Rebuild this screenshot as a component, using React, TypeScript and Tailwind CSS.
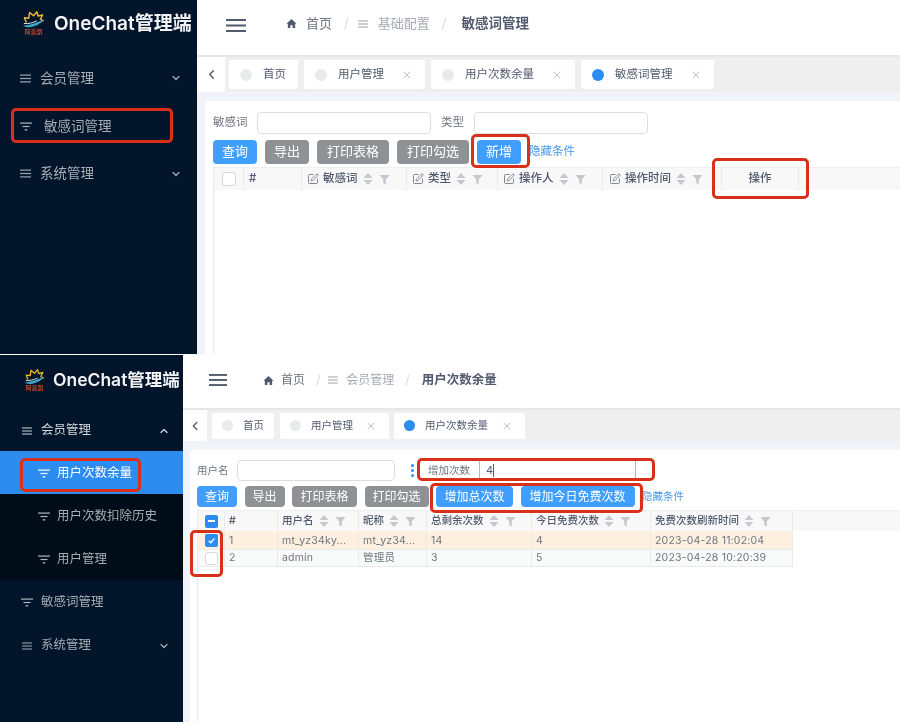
import React from "react";
import { ChevronDown, ChevronUp, ChevronLeft, X, SquarePen } from "lucide-react";

const Lines = ({ c = "w-[11px] h-[9px] text-[#9aa5b1]" }: { c?: string }) => (
  <svg viewBox="0 0 11 9" className={c + " shrink-0"} fill="currentColor">
    <rect x="0" y="0.5" width="11" height="1.2" />
    <rect x="0" y="3.9" width="11" height="1.2" />
    <rect x="0" y="7.3" width="11" height="1.2" />
  </svg>
);
const Funnel = ({ c = "text-[#aeb6bf]" }: { c?: string }) => (
  <svg viewBox="0 0 12 9" className={"w-[12px] h-[9px] shrink-0 " + c} fill="currentColor">
    <rect x="0" y="0.5" width="12" height="1.2" />
    <rect x="2.5" y="3.9" width="7" height="1.2" />
    <rect x="4.7" y="7.2" width="2.6" height="1.3" />
  </svg>
);
const Home = () => (
  <svg viewBox="0 0 12 12" className="w-[11px] h-[11px] shrink-0 text-[#515a6e]" fill="currentColor">
    <path d="M6 1 L11.5 6.2 H10 V11 H7.2 V7.8 H4.8 V11 H2 V6.2 H0.5 Z" />
  </svg>
);
const Logo = ({ c }: { c: string }) => (
  <div className={"flex flex-col items-center shrink-0 " + c}>
    <svg viewBox="0 0 24 18" className="w-full" fill="none">
      <path d="M4.5 12 L2.5 7 L7 7.5 L8 1.5 L12 5 L15.5 0.8 L16.8 5.2 L21.5 4 L19.2 8.5 L22.5 10.5" stroke="#f0b92e" strokeWidth="1.5" strokeLinejoin="round" />
      <path d="M1 15.5 C8 14.5 15 12.5 23.5 8.5 C19.5 13.5 13 16.5 7 17 C4.5 17.2 2.5 16.5 1 15.5 Z" fill="#3fa7c9" />
      <path d="M2 13 C7 13.5 11 12.5 15.5 10.3" stroke="#e9edf0" strokeWidth="1" />
    </svg>
    <span className="text-[6px] leading-[7px] text-[#c8472f] font-bold whitespace-nowrap">阿音凯</span>
  </div>
);
const Sort = () => (
  <svg viewBox="0 0 10 14" className="w-[10px] h-[14px] shrink-0" fill="#c5c8ce">
    <path d="M5 1 L9.5 6 H0.5 Z" />
    <path d="M5 13 L9.5 8 H0.5 Z" />
  </svg>
);
const Filter = () => (
  <svg viewBox="0 0 12 12" className="w-[11px] h-[11px] shrink-0" fill="#c5c8ce">
    <path d="M0.5 1 H11.5 L7.4 6 V11.5 L4.6 9.8 V6 Z" />
  </svg>
);
const Dot = ({ on, c }: { on?: boolean; c: string }) => (
  <span className={"rounded-full shrink-0 " + c + (on ? " bg-[#2d8cf0]" : " bg-[#e8eaec]")} />
);
const Tab = ({ label, w, on, close, dot, ml, pl, gap, text }: { label: string; w: string; on?: boolean; close?: boolean; dot: string; ml: string; pl: string; gap: string; text: string }) => (
  <div className={"h-full bg-white rounded-[2px] flex items-center shrink-0 text-[#515a6e] " + w + " " + ml + " " + pl + " " + gap + " " + text}>
    <Dot on={on} c={dot} />
    <span className="whitespace-nowrap mt-[1px]">{label}</span>
    {close && <X className="w-[12px] h-[12px] text-[#a9adb3] ml-auto mr-[12px]" strokeWidth={1.5} />}
  </div>
);
const Btn = ({ label, w, gray, c }: { label: string; w: string; gray?: boolean; c: string }) => (
  <div className={"rounded-[4px] text-white flex items-center justify-center shrink-0 whitespace-nowrap h-full " + w + " " + c + (gray ? " bg-[#8f9194]" : " bg-[#409eff]")}>{label}</div>
);
const TH = ({ label, w, edit, pl, gap, last }: { label: string; w: string; edit?: boolean; pl: string; gap: string; last?: boolean }) => (
  <div className={"h-full flex items-center border-r border-[#e8eaec] shrink-0 " + w + " " + pl}>
    {edit && <SquarePen className="w-[12px] h-[12px] text-[#6e7580] mr-[4px] shrink-0" strokeWidth={1.7} />}
    <span className="whitespace-nowrap">{label}</span>
    {!last && label !== "#" && (
      <span className={"flex items-center ml-[5px] " + gap}>
        <Sort />
        <Filter />
      </span>
    )}
  </div>
);
const Box = ({ c }: { c: string }) => <span className={"rounded-[3px] shrink-0 flex items-center justify-center " + c} />;
const Red = ({ c }: { c: string }) => <div className={"absolute border-[3px] border-[#d9301c] rounded-[5px] pointer-events-none " + c} />;
const TD = ({ w, t, pl = "pl-[5px]" }: { w: string; t: string; pl?: string }) => (
  <div className={"h-full flex items-center border-r border-[#e8eaec] shrink-0 whitespace-nowrap " + w + " " + pl}>{t}</div>
);

const Top = () => (
  <div className="relative flex h-[354px] overflow-hidden">
    <aside className="w-[197px] shrink-0 bg-[#03152b] flex flex-col text-[#a6adb4] text-[13.5px]">
      <div className="h-[54px] flex items-center pl-[22px] gap-[9px] shrink-0">
        <Logo c="w-[23px] -mt-[8px]" />
        <span className="text-[19px] font-semibold text-[#f1f3f5] whitespace-nowrap -mt-[6px]">OneChat管理端</span>
      </div>
      <div className="h-[48px] flex items-center pl-[20px] pr-[15px] gap-[9px]"><Lines /><span>会员管理</span><ChevronDown className="w-[12px] h-[12px] ml-auto" strokeWidth={2.4} /></div>
      <div className="h-[48px] flex items-center pl-[20px] gap-[12px]"><Funnel c="text-[#aeb6bf]" /><span>敏感词管理</span></div>
      <div className="h-[48px] flex items-center pl-[20px] pr-[15px] gap-[9px] pb-[1px]"><Lines /><span>系统管理</span><ChevronDown className="w-[12px] h-[12px] ml-auto" strokeWidth={2.4} /></div>
    </aside>
    <main className="flex-1 min-w-0 flex flex-col bg-[#f0f4f8]">
      <header className="h-[55px] bg-white flex items-center shrink-0 text-[13px] text-[#8d939d]">
        <svg viewBox="0 0 20 13" className="w-[20px] h-[13px] ml-[29px] text-[#515a6e] -mt-[4px]" fill="currentColor">
          <rect y="0" width="20" height="2" /><rect y="5.5" width="20" height="2" /><rect y="11" width="20" height="2" />
        </svg>
        <div className="flex items-center ml-[40px] -mt-[8px]">
          <Home />
          <span className="ml-[9px] text-[#6e7580]">首页</span>
          <span className="ml-[12px] text-[#d6d9de]">/</span>
          <span className="ml-[9px]"><Lines c="w-[10px] h-[8px] text-[#a3a8b0]" /></span>
          <span className="ml-[10px] text-[#a6abb3]">基础配置</span>
          <span className="ml-[12px] text-[#d6d9de]">/</span>
          <span className="ml-[15px] font-semibold text-[13.5px] text-[#515a6e]">敏感词管理</span>
        </div>
      </header>
      <div className="h-[37px] bg-[#efefef] border-t-2 border-[#e6e6e6] flex items-center shrink-0">
        <div className="w-[28px] h-full bg-white flex items-center justify-center shrink-0"><ChevronLeft className="w-[15px] h-[15px] text-[#515a6e]" strokeWidth={2.2} /></div>
        <div className="h-[29px] flex">
          <Tab label="首页" w="w-[69px]" ml="ml-[4px]" pl="pl-[11px]" gap="gap-[11px]" text="text-[11.5px]" dot="w-[12px] h-[12px]" />
          <Tab label="用户管理" w="w-[121px]" ml="ml-[6px]" pl="pl-[11px]" gap="gap-[11px]" text="text-[11.5px]" dot="w-[12px] h-[12px]" close />
          <Tab label="用户次数余量" w="w-[144px]" ml="ml-[6px]" pl="pl-[11px]" gap="gap-[11px]" text="text-[11.5px]" dot="w-[12px] h-[12px]" close />
          <Tab label="敏感词管理" w="w-[133px]" ml="ml-[6px]" pl="pl-[11px]" gap="gap-[11px]" text="text-[11.5px]" dot="w-[12px] h-[12px]" close on />
        </div>
      </div>
      <div className="flex-1 mt-[9px] ml-[8px] bg-white rounded-tl-[3px] pl-[8px] flex flex-col text-[11.5px] text-[#6e7580] min-h-0">
        <div className="flex items-center h-[22px] mt-[11px] shrink-0">
          <span className="w-[44px] whitespace-nowrap">敏感词</span>
          <span className="w-[174px] h-full rounded-[4px] border border-[#dcdee2] bg-white" />
          <span className="ml-[10px] w-[33px] whitespace-nowrap">类型</span>
          <span className="w-[174px] h-full rounded-[4px] border border-[#dcdee2] bg-white" />
        </div>
        <div className="flex items-center h-[24px] mt-[6px] gap-[8px] shrink-0">
          <Btn label="查询" w="w-[44px]" c="text-[13px]" />
          <Btn label="导出" w="w-[44px]" c="text-[13px]" gray />
          <Btn label="打印表格" w="w-[72px]" c="text-[13px]" gray />
          <Btn label="打印勾选" w="w-[72px]" c="text-[13px]" gray />
          <Btn label="新增" w="w-[44px]" c="text-[13px]" />
          <span className="text-[#4a98e8] whitespace-nowrap">隐藏条件</span>
        </div>
        <div className="flex-1 mt-[3px] border-l border-[#e8eaec] flex flex-col min-h-0">
          <div className="h-[23px] bg-[#f8f8f9] flex items-center border-t border-[#eceef0] text-[#515a6e] font-medium shrink-0">
            <div className="w-[30px] h-full flex items-center justify-center border-r border-[#e8eaec] shrink-0"><Box c="w-[14px] h-[14px] border border-[#d5d8dc] bg-white" /></div>
            <TH label="#" w="w-[58px]" pl="pl-[5px]" gap="gap-[5px]" />
            <TH label="敏感词" w="w-[105px]" pl="pl-[5px]" gap="gap-[6px]" edit />
            <TH label="类型" w="w-[91px]" pl="pl-[5px]" gap="gap-[6px]" edit />
            <TH label="操作人" w="w-[105px]" pl="pl-[5px]" gap="gap-[6px]" edit />
            <TH label="操作时间" w="w-[119px]" pl="pl-[6px]" gap="gap-[6px]" edit />
            <div className="w-[78px] h-full flex items-center justify-center border-x border-[#e8eaec] shrink-0 -ml-px">操作</div>
          </div>
        </div>
      </div>
    </main>
    <Red c="left-[11px] top-[108px] w-[162px] h-[35px]" />
    <Red c="left-[471px] top-[134px] w-[59px] h-[34px]" />
    <Red c="left-[712px] top-[158px] w-[97px] h-[41px]" />
  </div>
);

const Bottom = () => (
  <div className="relative flex h-[367px] mt-[1px] overflow-hidden">
    <aside className="w-[183px] shrink-0 bg-[#03152b] flex flex-col text-[#a6adb4] text-[12.5px]">
      <div className="h-[53px] flex items-center pl-[24px] gap-[8px] shrink-0">
        <Logo c="w-[21px] -mt-[3px]" />
        <span className="text-[17.5px] font-semibold text-[#f1f3f5] whitespace-nowrap -mt-[3px]">OneChat管理端</span>
      </div>
      <div className="h-[43px] flex items-center pl-[22px] pr-[13px] pt-[2px] gap-[9px] text-[#d5d9dd]"><Lines c="w-[10px] h-[8px] text-[#c6ccd2]" /><span>会员管理</span><ChevronUp className="w-[12px] h-[12px] ml-auto" strokeWidth={2.4} /></div>
      <div className="h-[43px] flex items-center pl-[38px] pt-[2px] gap-[7px] bg-[#2d8cf0] text-white"><Funnel c="w-[12px] text-white" /><span>用户次数余量</span></div>
      <div className="h-[43px] flex items-center pl-[38px] pt-[2px] gap-[7px] bg-[#000c17]"><Funnel /><span>用户次数扣除历史</span></div>
      <div className="h-[43px] flex items-center pl-[38px] pt-[2px] gap-[7px] bg-[#000c17]"><Funnel /><span>用户管理</span></div>
      <div className="h-[43px] flex items-center pl-[21px] pt-[2px] gap-[8px]"><Funnel /><span>敏感词管理</span></div>
      <div className="h-[43px] flex items-center pl-[22px] pr-[13px] pt-[2px] gap-[9px]"><Lines c="w-[10px] h-[8px] text-[#9aa5b1]" /><span>系统管理</span><ChevronDown className="w-[12px] h-[12px] ml-auto" strokeWidth={2.4} /></div>
    </aside>
    <main className="flex-1 min-w-0 flex flex-col bg-[#f0f4f8]">
      <header className="h-[53px] bg-white flex items-center shrink-0 text-[12px] text-[#8d939d]">
        <svg viewBox="0 0 18 12" className="w-[18px] h-[12px] ml-[26px] text-[#515a6e] -mt-[4px]" fill="currentColor">
          <rect y="0" width="18" height="1.9" /><rect y="5" width="18" height="1.9" /><rect y="10.1" width="18" height="1.9" />
        </svg>
        <div className="flex items-center ml-[36px] -mt-[3px]">
          <Home />
          <span className="ml-[7px] text-[#6e7580]">首页</span>
          <span className="ml-[11px] text-[#d6d9de]">/</span>
          <span className="ml-[8px]"><Lines c="w-[10px] h-[8px] text-[#a3a8b0]" /></span>
          <span className="ml-[8px] text-[#a6abb3]">会员管理</span>
          <span className="ml-[11px] text-[#d6d9de]">/</span>
          <span className="ml-[12px] font-semibold text-[12.5px] text-[#515a6e]">用户次数余量</span>
        </div>
      </header>
      <div className="h-[33px] bg-[#efefef] border-t-2 border-[#e6e6e6] flex items-center shrink-0">
        <div className="w-[24px] h-full bg-white flex items-center justify-center shrink-0"><ChevronLeft className="w-[14px] h-[14px] text-[#515a6e]" strokeWidth={2.2} /></div>
        <div className="h-[26px] flex">
          <Tab label="首页" w="w-[62px]" ml="ml-[5px]" pl="pl-[10px]" gap="gap-[10px]" text="text-[10.5px]" dot="w-[11px] h-[11px]" />
          <Tab label="用户管理" w="w-[109px]" ml="ml-[6px]" pl="pl-[10px]" gap="gap-[10px]" text="text-[10.5px]" dot="w-[11px] h-[11px]" close />
          <Tab label="用户次数余量" w="w-[131px]" ml="ml-[5px]" pl="pl-[10px]" gap="gap-[10px]" text="text-[10.5px]" dot="w-[11px] h-[11px]" close on />
        </div>
      </div>
      <div className="flex-1 mt-[9px] ml-[7px] bg-white rounded-tl-[3px] pl-[7px] flex flex-col text-[10.5px] text-[#6e7580] min-h-0">
        <div className="flex items-center h-[21px] mt-[10px] shrink-0">
          <span className="w-[40px] whitespace-nowrap">用户名</span>
          <span className="w-[158px] h-full rounded-[4px] border border-[#dcdee2] bg-white" />
          <span className="ml-[14px] flex flex-col gap-[2px] w-[6px] items-center">
            <span className="w-[3px] h-[3px] rounded-full bg-[#2d8cf0]" />
            <span className="w-[3px] h-[3px] rounded-full bg-[#2d8cf0]" />
            <span className="w-[3px] h-[3px] rounded-full bg-[#2d8cf0]" />
          </span>
          <span className="ml-[8px] w-[56px] whitespace-nowrap pl-[5px]">增加次数</span>
          <span className="w-[157px] h-full border-x border-[#8dc2f5] bg-white flex items-center pl-[6px] text-[11px] text-[#515a6e]">
            4<span className="w-px h-[13px] bg-[#515a6e]" />
          </span>
        </div>
        <div className="flex items-center h-[21px] mt-[5px] gap-[7.5px] shrink-0">
          <Btn label="查询" w="w-[40px]" c="text-[12px]" />
          <Btn label="导出" w="w-[40px]" c="text-[12px]" gray />
          <Btn label="打印表格" w="w-[65px]" c="text-[12px]" gray />
          <Btn label="打印勾选" w="w-[64px]" c="text-[12px]" gray />
          <Btn label="增加总次数" w="w-[77px]" c="text-[12px]" />
          <Btn label="增加今日免费次数" w="w-[114px]" c="text-[12px]" />
          <span className="text-[#4a98e8] whitespace-nowrap">隐藏条件</span>
        </div>
        <div className="flex-1 mt-[3px] border-l border-[#e8eaec] flex flex-col min-h-0">
          <div className="h-[21px] bg-[#f8f8f9] flex items-center border-t border-[#eceef0] text-[#515a6e] font-medium shrink-0">
            <div className="w-[27px] h-full flex items-center justify-center border-r border-[#e8eaec] shrink-0">
              <span className="w-[13px] h-[13px] rounded-[2px] bg-[#2d8cf0] flex items-center justify-center"><span className="w-[7px] h-[1.5px] bg-white" /></span>
            </div>
            <TH label="#" w="w-[53px]" pl="pl-[4px]" gap="gap-[5px]" />
            <TH label="用户名" w="w-[81px]" pl="pl-[4px]" gap="gap-[6px]" />
            <TH label="昵称" w="w-[68px]" pl="pl-[4px]" gap="gap-[6px]" />
            <TH label="总剩余次数" w="w-[105px]" pl="pl-[4px]" gap="gap-[6px]" />
            <TH label="今日免费次数" w="w-[119px]" pl="pl-[4px]" gap="gap-[6px]" />
            <TH label="免费次数刷新时间" w="w-[142px]" pl="pl-[4px]" gap="gap-[6px]" />
          </div>
          <div className="h-[18px] w-[595px] bg-[#fdf0df] flex items-center shrink-0 text-[10.5px] tracking-[0.2px] pt-[1px]">
            <div className="w-[27px] h-full flex items-center justify-center border-r border-[#e8eaec] shrink-0">
              <span className="w-[13px] h-[13px] rounded-[2px] bg-[#2d8cf0] flex items-center justify-center">
                <svg viewBox="0 0 10 10" className="w-[9px] h-[9px]" fill="none" stroke="#fff" strokeWidth="1.5"><path d="M2 5.2 L4.2 7.4 L8.2 2.8" /></svg>
              </span>
            </div>
            <TD w="w-[53px]" t="1" pl="pl-[4px]" />
            <TD w="w-[81px]" t="mt_yz34ky..." pl="pl-[4px]" />
            <TD w="w-[68px]" t="mt_yz34..." pl="pl-[4px]" />
            <TD w="w-[105px]" t="14" pl="pl-[4px]" />
            <TD w="w-[119px]" t="4" pl="pl-[4px]" />
            <TD w="w-[142px]" t="2023-04-28 11:02:04" pl="pl-[4px]" />
          </div>
          <div className="h-[18px] w-[595px] bg-[#f9fafa] flex items-center border-y border-[#e8eaec] shrink-0 text-[10.5px] tracking-[0.2px]">
            <div className="w-[27px] h-full flex items-center justify-center border-r border-[#e8eaec] shrink-0"><Box c="w-[13px] h-[13px] border border-[#d5d8dc] bg-white" /></div>
            <TD w="w-[53px]" t="2" pl="pl-[4px]" />
            <TD w="w-[81px]" t="admin" pl="pl-[4px]" />
            <TD w="w-[68px]" t="管理员" pl="pl-[4px]" />
            <TD w="w-[105px]" t="3" pl="pl-[4px]" />
            <TD w="w-[119px]" t="5" pl="pl-[4px]" />
            <TD w="w-[142px]" t="2023-04-28 10:20:39" pl="pl-[4px]" />
          </div>
        </div>
      </div>
    </main>
    <Red c="left-[20px] top-[103px] w-[121px] h-[34px]" />
    <Red c="left-[417px] top-[103px] w-[238px] h-[23px]" />
    <Red c="left-[430px] top-[128px] w-[213px] h-[30px]" />
    <Red c="left-[190px] top-[175px] w-[33px] h-[47px]" />
  </div>
);

export default function App() {
  return (
    <div className="w-[900px] h-[722px] overflow-hidden bg-white blur-[0.35px] font-['Inter','Noto_Sans_CJK_SC',sans-serif]">
      <Top />
      <Bottom />
    </div>
  );
}
